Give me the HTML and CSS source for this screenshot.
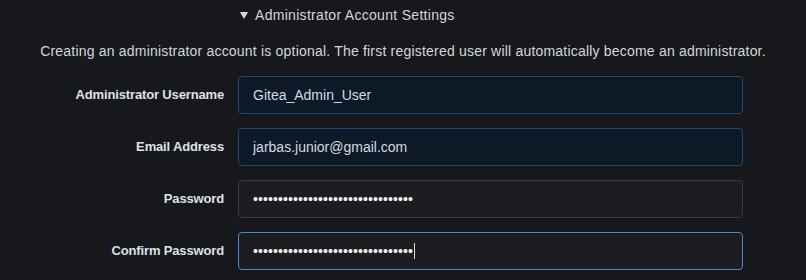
FILE: index.html
```html
<!DOCTYPE html>
<html lang="en">
<head>
<meta charset="utf-8">
<title>Administrator Account Settings</title>
<link rel="stylesheet" href="styles.css">
</head>
<body>
<div class="page">
  <div class="form-grid">
    <div class="summary"><span class="tri"></span>Administrator Account Settings</div>
  </div>
  <p class="help">Creating an administrator account is optional. The first registered user will automatically become an administrator.</p>
  <div class="form-grid fields">
    <label class="label">Administrator Username</label>
    <div class="input autofill">Gitea_Admin_User</div>
    <label class="label">Email Address</label>
    <div class="input autofill">jarbas.junior@gmail.com</div>
    <label class="label">Password</label>
    <div class="input"><span class="dots">••••••••••••••••••••••••••••••••</span></div>
    <label class="label">Confirm Password</label>
    <div class="input focused"><span class="dots">••••••••••••••••••••••••••••••••</span><span class="caret"></span></div>
  </div>
</div>
</body>
</html>
```
FILE: styles.css
```css
html, body {
  margin: 0;
  padding: 0;
  background: #16181b;
}
body {
  font-family: "Liberation Sans", Arial, sans-serif;
  font-size: 14px;
  color: #d2d7dc;
}
.page {
  padding-top: 5px;
}
.form-grid {
  display: grid;
  grid-template-columns: 224px 505px;
  column-gap: 14px;
}
.summary {
  grid-column: 2;
  display: flex;
  align-items: center;
  height: 20px;
  padding-left: 2px;
  letter-spacing: 0.3px;
  color: #d2d7dc;
}
.tri {
  width: 0;
  height: 0;
  border-left: 4px solid transparent;
  border-right: 4px solid transparent;
  border-top: 7px solid #d2d7dc;
  margin-right: 7px;
}
.help {
  margin: 16px 0 0;
  height: 20px;
  line-height: 20px;
  letter-spacing: 0.2px;
  text-align: center;
}
.fields {
  margin-top: 15px;
  row-gap: 14px;
}
.label {
  display: flex;
  align-items: center;
  justify-content: flex-end;
  padding-bottom: 1px;
  font-weight: bold;
  font-size: 13px;
  letter-spacing: -0.15px;
  color: #dde2e7;
}
.input {
  box-sizing: border-box;
  height: 38px;
  display: flex;
  align-items: center;
  padding: 0 14px;
  border: 1px solid #383b40;
  border-radius: 4px;
  background: #1b1d21;
  color: #d6dbe0;
}
.input.autofill {
  background: #0c1927;
  border-color: #234a73;
}
.input.focused {
  border-color: #4a8ad2;
}
.dots {
  letter-spacing: 0.1px;
  color: #f4f6f8;
}
.caret {
  display: inline-block;
  width: 1px;
  height: 16px;
  background: #d6dbe0;
  margin-left: 1px;
}
```
